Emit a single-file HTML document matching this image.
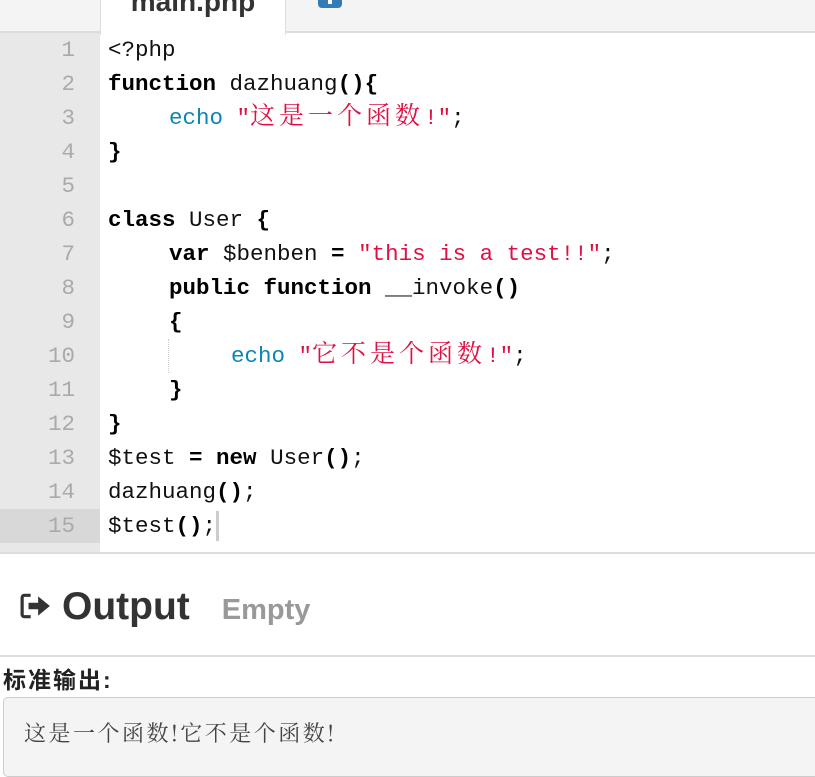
<!DOCTYPE html>
<html><head><meta charset="utf-8"><style>
*{margin:0;padding:0;box-sizing:border-box}
body{width:815px;height:766px;overflow:hidden;background:#fff;font-family:"Liberation Sans","Noto Sans CJK SC",sans-serif;position:relative}
.tabbar{position:absolute;left:0;top:0;width:815px;height:33px;background:#f4f4f4;border-bottom:2px solid #ddd}
.tab{position:absolute;left:100px;top:-12px;width:186px;height:47px;background:#fff;border-left:1px solid #ddd;border-right:1px solid #ddd;font-weight:bold;font-size:28px;color:#333;text-align:center;line-height:28px}
.icon{position:absolute;left:318px;top:-14px;width:24px;height:22px;background:#337ab7;border-radius:4px}
.icon:after{content:"";position:absolute;left:10px;top:12px;width:4px;height:6px;background:#fff}
.editor{position:absolute;left:0;top:33px;width:815px;height:521px;border-bottom:2px solid #ddd}
.gutter{position:absolute;left:0;top:0;width:100px;height:519px;background:#e8e8e8}
.ln{position:absolute;left:0;width:75px;text-align:right;font-family:"Liberation Mono",monospace;font-size:22.5px;color:#aaa;height:34px;line-height:34px}
.code{position:absolute;left:108px;top:0;font-family:"Liberation Mono","Noto Sans CJK SC",monospace;font-size:22.5px;line-height:34px;color:#111;white-space:pre}
.code div{height:34px}
.i1{padding-left:61px}.i2{padding-left:123px}
.k{font-weight:bold;color:#000}
.e{color:#0a86b3}
.s{color:#dd1144}
.c{font-family:"Noto Serif CJK SC",serif;font-size:25px;letter-spacing:4px;line-height:20px}
.act{position:absolute;left:0;top:476px;width:100px;height:34px;background:#d8d8d8}
.cursor{display:inline-block;width:3px;height:30px;background:#ccc;vertical-align:middle}
.guide{position:absolute;left:168px;top:306px;height:34px;border-left:1px dotted #ccc}
h2{position:absolute;left:20px;top:585px;font-size:39px;font-weight:bold;color:#333;white-space:nowrap}
h2 small{font-size:29px;color:#999;margin-left:32px}
.hr{position:absolute;left:0;top:655px;width:815px;border-top:2px solid #ddd}
.lab{position:absolute;left:3px;top:661px;font-size:23px;font-weight:bold;color:#222;letter-spacing:2px}
.box{position:absolute;left:3px;top:697px;width:820px;height:80px;background:#f4f4f4;border:1px solid #ccc;border-radius:5px;font-family:"Noto Serif CJK SC",serif;font-size:22px;color:#444;padding:19px 0 0 20px;letter-spacing:2.5px}
</style></head><body>
<div class="tabbar"><div class="tab">main.php</div><div class="icon"></div></div>
<div class="editor">
<div class="gutter"></div><div class="act"></div>
<div class="ln" style="top:0">1</div><div class="ln" style="top:34px">2</div><div class="ln" style="top:68px">3</div><div class="ln" style="top:102px">4</div><div class="ln" style="top:136px">5</div><div class="ln" style="top:170px">6</div><div class="ln" style="top:204px">7</div><div class="ln" style="top:238px">8</div><div class="ln" style="top:272px">9</div><div class="ln" style="top:306px">10</div><div class="ln" style="top:340px">11</div><div class="ln" style="top:374px">12</div><div class="ln" style="top:408px">13</div><div class="ln" style="top:442px">14</div><div class="ln" style="top:476px">15</div>
<div class="guide"></div>
<div class="code"><div>&lt;?php</div><div><span class="k">function</span> dazhuang<span class="k">(){</span></div><div class="i1"><span class="e">echo</span> <span class="s">"<span class="c">这是一个函数</span>!"</span>;</div><div><span class="k">}</span></div><div></div><div><span class="k">class</span> User <span class="k">{</span></div><div class="i1"><span class="k">var</span> $benben <span class="k">=</span> <span class="s">"this is a test!!"</span>;</div><div class="i1"><span class="k">public function</span> __invoke<span class="k">()</span></div><div class="i1"><span class="k">{</span></div><div class="i2"><span class="e">echo</span> <span class="s">"<span class="c">它不是个函数</span>!"</span>;</div><div class="i1"><span class="k">}</span></div><div><span class="k">}</span></div><div>$test <span class="k">=</span> <span class="k">new</span> User<span class="k">()</span>;</div><div>dazhuang<span class="k">()</span>;</div><div>$test<span class="k">()</span>;<span class="cursor"></span></div></div>
</div>
<h2><svg width="32" height="28" viewBox="0 0 30 26" style="vertical-align:-1px;margin-right:10px"><path d="M10 3H4a2 2 0 0 0-2 2v16a2 2 0 0 0 2 2h6" fill="none" stroke="#333" stroke-width="3"/><path d="M8 10h9V4l11 9-11 9v-6H8z" fill="#333"/></svg>Output<small>Empty</small></h2>
<div class="hr"></div>
<div class="lab">标准输出:</div>
<div class="box">这是一个函数!它不是个函数!</div>
</body></html>
